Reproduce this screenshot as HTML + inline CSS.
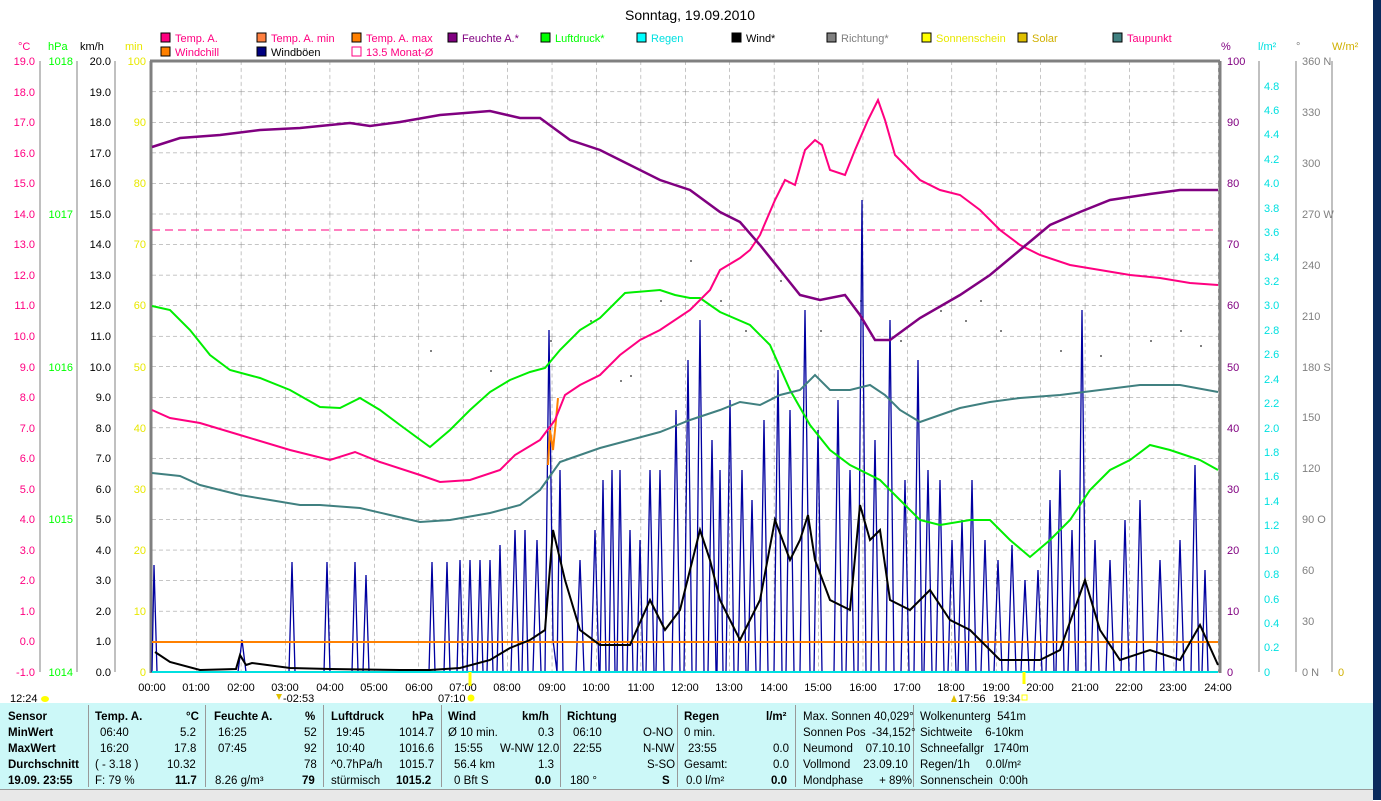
<!DOCTYPE html>
<html><head><meta charset="utf-8"><style>
body{margin:0;width:1381px;height:800px;overflow:hidden;background:#fff;font-family:"Liberation Sans",sans-serif;position:relative}
svg text{font-family:"Liberation Sans",sans-serif;font-size:11px}
#tbl{position:absolute;left:0;top:703px;width:1373px;height:86px;background:#ccf8f8;font-size:11.5px}
#tbl div{position:absolute;white-space:nowrap}
.b{font-weight:bold}
.sep{position:absolute;top:2px;width:1px;height:82px;background:#999}
#status{position:absolute;left:0;top:789px;width:1373px;height:11px;background:#e8e8e8;border-top:1px solid #999}
#edge{position:absolute;left:1373px;top:0;width:8px;height:800px;background:#0a2a5c}
</style></head><body>
<svg width="1381" height="703" style="position:absolute;left:0;top:0">
<defs>
<pattern id="g" x="152" y="61" width="44.42" height="30.55" patternUnits="userSpaceOnUse">
<line x1="0" y1="0" x2="0" y2="30.55" stroke="#888" stroke-dasharray="4,3"/>
<line x1="0" y1="0" x2="44.42" y2="0" stroke="#888" stroke-dasharray="4,3"/>
</pattern>
</defs>
<text x="690" y="20" text-anchor="middle" font-size="14" style="font-size:14px">Sonntag, 19.09.2010</text>
<!-- legend -->
<g font-size="11">
<rect x="161" y="33" width="9" height="9" fill="#ff0080" stroke="#000"/><text x="175" y="42" fill="#ff0080">Temp. A.</text>
<rect x="257" y="33" width="9" height="9" fill="#ff8040" stroke="#000"/><text x="271" y="42" fill="#ff0080">Temp. A. min</text>
<rect x="352" y="33" width="9" height="9" fill="#ff8000" stroke="#000"/><text x="366" y="42" fill="#ff0080">Temp. A. max</text>
<rect x="448" y="33" width="9" height="9" fill="#800080" stroke="#000"/><text x="462" y="42" fill="#800080">Feuchte A.*</text>
<rect x="541" y="33" width="9" height="9" fill="#00ff00" stroke="#000"/><text x="555" y="42" fill="#00ff00">Luftdruck*</text>
<rect x="637" y="33" width="9" height="9" fill="#00ffff" stroke="#000"/><text x="651" y="42" fill="#00e0e0">Regen</text>
<rect x="732" y="33" width="9" height="9" fill="#000" stroke="#000"/><text x="746" y="42" fill="#000">Wind*</text>
<rect x="827" y="33" width="9" height="9" fill="#808080" stroke="#000"/><text x="841" y="42" fill="#808080">Richtung*</text>
<rect x="922" y="33" width="9" height="9" fill="#ffff00" stroke="#000"/><text x="936" y="42" fill="#e8e800">Sonnenschein</text>
<rect x="1018" y="33" width="9" height="9" fill="#e0c000" stroke="#000"/><text x="1032" y="42" fill="#d0b000">Solar</text>
<rect x="1113" y="33" width="9" height="9" fill="#408080" stroke="#000"/><text x="1127" y="42" fill="#ff0080">Taupunkt</text>
<rect x="161" y="47" width="9" height="9" fill="#ff8000" stroke="#000"/><text x="175" y="56" fill="#ff0080">Windchill</text>
<rect x="257" y="47" width="9" height="9" fill="#000080" stroke="#000"/><text x="271" y="56" fill="#000">Windböen</text>
<rect x="352" y="47" width="9" height="9" fill="#fff" stroke="#ff0080"/><text x="366" y="56" fill="#ff0080">13.5 Monat-Ø</text>
</g>
<!-- axis titles -->
<text x="18" y="50" fill="#ff0080">°C</text><text x="48" y="50" fill="#00ff00">hPa</text><text x="80" y="50" fill="#000">km/h</text><text x="125" y="50" fill="#e8e800">min</text>
<text x="1221" y="50" fill="#800080">%</text><text x="1258" y="50" fill="#00e0e0">l/m²</text><text x="1296" y="50" fill="#808080">°</text><text x="1332" y="50" fill="#d0b000">W/m²</text>
<!-- left axis lines -->
<g stroke="#808080" stroke-width="1">
<line x1="40" y1="61" x2="40" y2="672"/><line x1="77" y1="61" x2="77" y2="672"/><line x1="115" y1="61" x2="115" y2="672"/>
<line x1="1259" y1="61" x2="1259" y2="672"/><line x1="1296" y1="61" x2="1296" y2="672"/><line x1="1332" y1="61" x2="1332" y2="672"/>
</g>
<g font-size="11" text-anchor="end" fill="#ff0080">
<text x="35" y="65">19.0</text><text x="35" y="96">18.0</text><text x="35" y="126">17.0</text><text x="35" y="157">16.0</text><text x="35" y="187">15.0</text><text x="35" y="218">14.0</text><text x="35" y="248">13.0</text><text x="35" y="279">12.0</text><text x="35" y="309">11.0</text><text x="35" y="340">10.0</text><text x="35" y="371">9.0</text><text x="35" y="401">8.0</text><text x="35" y="432">7.0</text><text x="35" y="462">6.0</text><text x="35" y="493">5.0</text><text x="35" y="523">4.0</text><text x="35" y="554">3.0</text><text x="35" y="584">2.0</text><text x="35" y="615">1.0</text><text x="35" y="645">0.0</text><text x="35" y="676">-1.0</text>
</g>
<g font-size="11" text-anchor="end" fill="#00ff00">
<text x="73" y="65">1018</text><text x="73" y="218">1017</text><text x="73" y="371">1016</text><text x="73" y="523">1015</text><text x="73" y="676">1014</text>
</g>
<g font-size="11" text-anchor="end" fill="#000">
<text x="111" y="65">20.0</text><text x="111" y="96">19.0</text><text x="111" y="126">18.0</text><text x="111" y="157">17.0</text><text x="111" y="187">16.0</text><text x="111" y="218">15.0</text><text x="111" y="248">14.0</text><text x="111" y="279">13.0</text><text x="111" y="309">12.0</text><text x="111" y="340">11.0</text><text x="111" y="371">10.0</text><text x="111" y="401">9.0</text><text x="111" y="432">8.0</text><text x="111" y="462">7.0</text><text x="111" y="493">6.0</text><text x="111" y="523">5.0</text><text x="111" y="554">4.0</text><text x="111" y="584">3.0</text><text x="111" y="615">2.0</text><text x="111" y="645">1.0</text><text x="111" y="676">0.0</text>
</g>
<g font-size="11" text-anchor="end" fill="#e8e800">
<text x="146" y="65">100</text><text x="146" y="126">90</text><text x="146" y="187">80</text><text x="146" y="248">70</text><text x="146" y="309">60</text><text x="146" y="371">50</text><text x="146" y="432">40</text><text x="146" y="493">30</text><text x="146" y="554">20</text><text x="146" y="615">10</text><text x="146" y="676">0</text>
</g>
<g font-size="11" fill="#800080">
<text x="1227" y="65">100</text><text x="1227" y="126">90</text><text x="1227" y="187">80</text><text x="1227" y="248">70</text><text x="1227" y="309">60</text><text x="1227" y="371">50</text><text x="1227" y="432">40</text><text x="1227" y="493">30</text><text x="1227" y="554">20</text><text x="1227" y="615">10</text><text x="1227" y="676">0</text>
</g>
<g font-size="11" fill="#00e0e0">
<text x="1264" y="90">4.8</text><text x="1264" y="114">4.6</text><text x="1264" y="138">4.4</text><text x="1264" y="163">4.2</text><text x="1264" y="187">4.0</text><text x="1264" y="212">3.8</text><text x="1264" y="236">3.6</text><text x="1264" y="261">3.4</text><text x="1264" y="285">3.2</text><text x="1264" y="309">3.0</text><text x="1264" y="334">2.8</text><text x="1264" y="358">2.6</text><text x="1264" y="383">2.4</text><text x="1264" y="407">2.2</text><text x="1264" y="432">2.0</text><text x="1264" y="456">1.8</text><text x="1264" y="480">1.6</text><text x="1264" y="505">1.4</text><text x="1264" y="529">1.2</text><text x="1264" y="554">1.0</text><text x="1264" y="578">0.8</text><text x="1264" y="603">0.6</text><text x="1264" y="627">0.4</text><text x="1264" y="651">0.2</text><text x="1264" y="676">0</text>
</g>
<g font-size="11" fill="#808080">
<text x="1302" y="65">360 N</text><text x="1302" y="116">330</text><text x="1302" y="167">300</text><text x="1302" y="218">270 W</text><text x="1302" y="269">240</text><text x="1302" y="320">210</text><text x="1302" y="371">180 S</text><text x="1302" y="421">150</text><text x="1302" y="472">120</text><text x="1302" y="523">90 O</text><text x="1302" y="574">60</text><text x="1302" y="625">30</text><text x="1302" y="676">0 N</text>
</g>
<text x="1338" y="676" fill="#d0b000">0</text>
<!-- plot -->
<rect x="152" y="61" width="1067" height="611" fill="url(#g)"/>
<line x1="150" y1="61" x2="1220" y2="61" stroke="#808080" stroke-width="3"/>
<line x1="151" y1="61" x2="151" y2="673" stroke="#808080" stroke-width="3"/>
<line x1="1220" y1="61" x2="1220" y2="673" stroke="#808080" stroke-width="3"/>
<line x1="152" y1="230" x2="1218" y2="230" stroke="#ff0080" stroke-dasharray="8,5"/>
<g fill="#808080">
<rect x="550" y="340" width="2" height="2"/><rect x="590" y="320" width="2" height="2"/><rect x="620" y="380" width="2" height="2"/><rect x="660" y="300" width="2" height="2"/><rect x="690" y="260" width="2" height="2"/><rect x="720" y="300" width="2" height="2"/><rect x="745" y="330" width="2" height="2"/><rect x="780" y="280" width="2" height="2"/><rect x="820" y="330" width="2" height="2"/><rect x="860" y="300" width="2" height="2"/><rect x="900" y="340" width="2" height="2"/><rect x="940" y="310" width="2" height="2"/><rect x="965" y="320" width="2" height="2"/><rect x="980" y="300" width="2" height="2"/><rect x="1000" y="330" width="2" height="2"/><rect x="1060" y="350" width="2" height="2"/><rect x="1100" y="355" width="2" height="2"/><rect x="1150" y="340" width="2" height="2"/><rect x="1180" y="330" width="2" height="2"/><rect x="1200" y="345" width="2" height="2"/><rect x="490" y="370" width="2" height="2"/><rect x="430" y="350" width="2" height="2"/><rect x="630" y="375" width="2" height="2"/>
</g>
<polyline fill="none" stroke="#0000a0" stroke-width="1.3" points="152,672 154,565 157,672 238,672 242,640 246,672 289,672 292,562 295,672 324,672 327,562 330,672 352,672 355,562 358,672 363,672 366,575 369,672 429,672 432,562 435,672 444,672 447,562 450,672 457,672 460,560 463,672 467,672 470,560 473,672 477,672 480,560 483,672 487,672 490,560 493,672 497,672 500,545 503,672 511,672 515,530 519,672 522,672 525,530 528,672 533,672 537,540 541,672 545,672 549,330 553,640 557,672 560,470 563,672 576,672 580,560 584,672 591,672 595,530 599,672 600,672 603,480 606,672 609,672 612,470 615,672 617,672 620,470 623,672 627,672 630,530 633,672 637,672 640,540 643,672 646,672 650,470 654,672 656,672 660,470 664,672 672,672 676,410 680,672 684,672 688,360 692,672 696,672 700,320 704,672 708,672 712,440 716,672 717,672 720,470 723,672 726,672 730,400 734,672 738,672 742,470 746,672 748,672 752,500 756,672 760,672 764,420 768,672 774,672 778,370 782,672 786,672 790,410 794,672 800,672 805,310 810,672 814,672 818,430 822,672 834,672 838,400 842,672 846,672 850,470 854,672 858,672 862,200 866,672 871,672 875,440 879,672 886,672 890,320 894,672 901,672 905,480 909,672 914,672 918,360 922,672 924,672 928,470 932,672 936,672 940,480 944,672 948,672 952,540 956,672 958,672 962,520 966,672 968,672 972,480 976,672 981,672 985,540 989,672 994,672 998,560 1002,672 1008,672 1012,545 1016,672 1021,672 1025,580 1029,672 1034,672 1038,570 1042,672 1046,672 1050,500 1054,672 1056,672 1060,470 1064,672 1068,672 1072,530 1076,672 1078,672 1082,310 1086,672 1091,672 1095,540 1099,672 1106,672 1110,560 1114,672 1121,672 1125,520 1129,672 1136,672 1140,500 1144,672 1156,672 1160,560 1164,672 1176,672 1180,540 1184,672 1191,672 1195,465 1199,672 1202,672 1205,570 1208,672 1218,672"/>
<line x1="152" y1="672" x2="1218" y2="672" stroke="#00e0e0" stroke-width="2"/>
<line x1="152" y1="642" x2="1218" y2="642" stroke="#ff8000" stroke-width="2"/>
<polyline fill="none" stroke="#000" stroke-width="2" points="155,652 170,662 200,670 236,669 240,655 246,665 252,663 290,668 330,669 400,670 430,670 460,668 490,660 510,648 530,640 545,630 553,530 565,580 580,630 600,645 630,645 650,600 665,630 680,610 690,570 700,530 710,560 720,600 740,640 760,600 775,520 790,560 800,540 808,515 815,560 830,600 850,610 860,505 870,540 880,530 890,600 910,610 930,590 950,620 970,630 1000,660 1040,660 1060,650 1085,580 1100,630 1120,660 1150,650 1180,660 1200,625 1218,665"/>
<polyline fill="none" stroke="#00ee00" stroke-width="2" points="152,306 170,310 190,330 210,355 230,370 260,378 290,390 320,407 340,408 360,398 380,410 400,425 430,447 450,430 470,410 490,392 510,380 530,372 545,368 560,350 580,330 600,318 625,293 660,290 675,295 690,298 700,298 720,312 750,325 770,345 790,390 810,425 830,450 850,465 880,480 900,500 920,520 940,525 970,520 990,520 1010,540 1030,557 1050,540 1070,520 1090,490 1110,470 1130,460 1150,445 1170,450 1200,460 1218,470"/>
<polyline fill="none" stroke="#408080" stroke-width="2" points="152,473 180,476 200,485 240,495 270,500 300,505 320,505 360,508 390,515 420,522 450,520 490,513 520,505 540,490 560,462 580,455 600,448 630,440 660,432 690,420 720,410 740,402 760,405 780,395 800,390 815,375 830,390 850,390 870,385 885,395 900,410 920,422 940,415 960,408 990,402 1020,398 1060,395 1100,390 1140,385 1180,385 1218,392"/>
<polyline fill="none" stroke="#ff8000" stroke-width="2" points="548,465 550,430 553,450 556,420 558,398"/>
<polyline fill="none" stroke="#ff0080" stroke-width="2" points="152,410 170,418 200,423 240,435 290,450 330,460 355,452 380,462 420,475 440,482 470,480 500,470 515,455 540,440 555,420 565,395 580,385 600,375 620,355 640,340 660,330 690,310 710,290 720,270 740,258 750,250 760,235 775,200 785,180 795,185 805,150 815,140 822,145 830,170 845,175 855,150 868,120 878,100 885,120 895,155 920,180 940,190 960,195 980,210 1000,230 1020,245 1040,255 1070,265 1100,270 1130,275 1160,278 1190,283 1218,285"/>
<polyline fill="none" stroke="#800080" stroke-width="2.5" points="152,147 180,138 220,135 260,130 300,128 350,123 370,126 400,122 440,115 490,111 520,118 540,118 570,140 600,150 630,165 660,180 690,190 720,212 740,222 760,245 780,270 800,295 820,300 845,295 860,315 875,340 890,340 920,318 960,295 990,275 1020,250 1050,225 1080,212 1110,200 1150,194 1180,190 1218,190"/>
<!-- x labels -->
<g font-size="11" text-anchor="middle" fill="#000">
<text x="152" y="691">00:00</text><text x="196" y="691">01:00</text><text x="241" y="691">02:00</text><text x="285" y="691">03:00</text><text x="330" y="691">04:00</text><text x="374" y="691">05:00</text><text x="419" y="691">06:00</text><text x="463" y="691">07:00</text><text x="507" y="691">08:00</text><text x="552" y="691">09:00</text><text x="596" y="691">10:00</text><text x="641" y="691">11:00</text><text x="685" y="691">12:00</text><text x="729" y="691">13:00</text><text x="774" y="691">14:00</text><text x="818" y="691">15:00</text><text x="863" y="691">16:00</text><text x="907" y="691">17:00</text><text x="951" y="691">18:00</text><text x="996" y="691">19:00</text><text x="1040" y="691">20:00</text><text x="1085" y="691">21:00</text><text x="1129" y="691">22:00</text><text x="1173" y="691">23:00</text><text x="1218" y="691">24:00</text>
</g>
<g font-size="11" fill="#000">
<text x="10" y="702">12:24</text><ellipse cx="45" cy="699" rx="4" ry="3" fill="#ffff00"/>
<text x="283" y="702">-02:53</text><path d="M276 694 l3 6 l3 -6z" fill="#e0c000"/>
<text x="438" y="702">07:10</text><circle cx="471" cy="698" r="3.5" fill="#ffff00"/>
<line x1="470" y1="672" x2="470" y2="686" stroke="#ffff00" stroke-width="3"/>
<text x="958" y="702">17:56</text><path d="M951 702 l3 -7 l3 7z" fill="#e0c000"/>
<text x="993" y="702">19:34</text><rect x="1022" y="695" width="5" height="5" fill="none" stroke="#ffff00"/>
<line x1="1024" y1="672" x2="1024" y2="684" stroke="#ffff00" stroke-width="3"/>
</g>
</svg>
<div id="tbl">
<div class="sep" style="left:88px"></div><div class="sep" style="left:205px"></div><div class="sep" style="left:323px"></div><div class="sep" style="left:441px"></div><div class="sep" style="left:560px"></div><div class="sep" style="left:677px"></div><div class="sep" style="left:795px"></div><div class="sep" style="left:913px"></div>
<div class="b" style="left:8px;top:8px">Sensor</div><div class="b" style="left:8px;top:24px">MinWert</div><div class="b" style="left:8px;top:40px">MaxWert</div><div class="b" style="left:8px;top:56px">Durchschnitt</div><div class="b" style="left:8px;top:72px">19.09. 23:55</div>
<div class="b" style="left:95px;top:8px">Temp. A.</div><div class="b" style="left:186px;top:8px">°C</div>
<div style="left:100px;top:24px">06:40</div><div style="left:180px;top:24px">5.2</div>
<div style="left:100px;top:40px">16:20</div><div style="left:174px;top:40px">17.8</div>
<div style="left:95px;top:56px">( - 3.18 )</div><div style="left:167px;top:56px">10.32</div>
<div style="left:95px;top:72px">F: 79 %</div><div class="b" style="left:175px;top:72px">11.7</div>
<div class="b" style="left:214px;top:8px">Feuchte A.</div><div class="b" style="left:305px;top:8px">%</div>
<div style="left:218px;top:24px">16:25</div><div style="left:304px;top:24px">52</div>
<div style="left:218px;top:40px">07:45</div><div style="left:304px;top:40px">92</div>
<div style="left:304px;top:56px">78</div>
<div style="left:215px;top:72px">8.26 g/m³</div><div class="b" style="left:302px;top:72px">79</div>
<div class="b" style="left:331px;top:8px">Luftdruck</div><div class="b" style="left:412px;top:8px">hPa</div>
<div style="left:336px;top:24px">19:45</div><div style="left:399px;top:24px">1014.7</div>
<div style="left:336px;top:40px">10:40</div><div style="left:399px;top:40px">1016.6</div>
<div style="left:331px;top:56px">^0.7hPa/h</div><div style="left:399px;top:56px">1015.7</div>
<div style="left:331px;top:72px">stürmisch</div><div class="b" style="left:396px;top:72px">1015.2</div>
<div class="b" style="left:448px;top:8px">Wind</div><div class="b" style="left:522px;top:8px">km/h</div>
<div style="left:448px;top:24px">Ø 10 min.</div><div style="left:538px;top:24px">0.3</div>
<div style="left:454px;top:40px">15:55</div><div style="left:500px;top:40px">W-NW 12.0</div>
<div style="left:454px;top:56px">56.4 km</div><div style="left:538px;top:56px">1.3</div>
<div style="left:454px;top:72px">0 Bft S</div><div class="b" style="left:535px;top:72px">0.0</div>
<div class="b" style="left:567px;top:8px">Richtung</div>
<div style="left:573px;top:24px">06:10</div><div style="left:643px;top:24px">O-NO</div>
<div style="left:573px;top:40px">22:55</div><div style="left:643px;top:40px">N-NW</div>
<div style="left:647px;top:56px">S-SO</div>
<div style="left:570px;top:72px">180 °</div><div class="b" style="left:662px;top:72px">S</div>
<div class="b" style="left:684px;top:8px">Regen</div><div class="b" style="left:766px;top:8px">l/m²</div>
<div style="left:684px;top:24px">0 min.</div>
<div style="left:688px;top:40px">23:55</div><div style="left:773px;top:40px">0.0</div>
<div style="left:684px;top:56px">Gesamt:</div><div style="left:773px;top:56px">0.0</div>
<div style="left:686px;top:72px">0.0 l/m²</div><div class="b" style="left:771px;top:72px">0.0</div>
<div style="left:803px;top:8px">Max. Sonnen 40,029°</div>
<div style="left:803px;top:24px">Sonnen Pos &nbsp;-34,152°</div>
<div style="left:803px;top:40px">Neumond &nbsp;&nbsp;&nbsp;07.10.10</div>
<div style="left:803px;top:56px">Vollmond &nbsp;&nbsp;&nbsp;23.09.10</div>
<div style="left:803px;top:72px">Mondphase &nbsp;&nbsp;&nbsp;&nbsp;+ 89%</div>
<div style="left:920px;top:8px">Wolkenunterg &nbsp;541m</div>
<div style="left:920px;top:24px">Sichtweite &nbsp;&nbsp;&nbsp;6-10km</div>
<div style="left:920px;top:40px">Schneefallgr &nbsp;&nbsp;1740m</div>
<div style="left:920px;top:56px">Regen/1h &nbsp;&nbsp;&nbsp;&nbsp;0.0l/m²</div>
<div style="left:920px;top:72px">Sonnenschein &nbsp;0:00h</div>
</div>
<div id="status"></div>
<div id="edge"></div>
</body></html>
